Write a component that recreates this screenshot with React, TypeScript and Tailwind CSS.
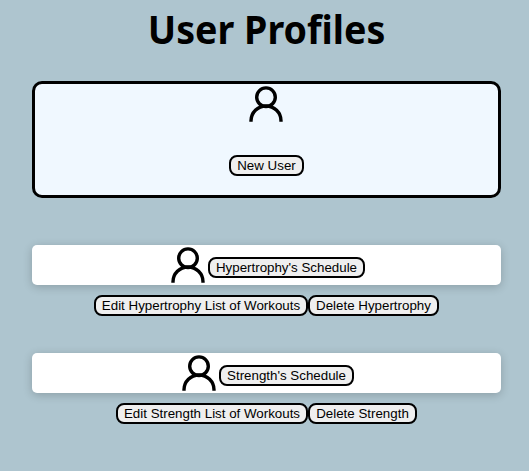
import React from "react";

function UserIcon() {
  return (
    <svg viewBox="0 0 40 40" className="block size-10 shrink-0" fill="none" stroke="#000" strokeWidth="3.4">
      <circle cx="20" cy="13.2" r="9.3" />
      <path d="M5 37.7v-.9a15 14.8 0 0 1 30 0v.9" />
    </svg>
  );
}

function Button({ width, children }: { width: string; children: React.ReactNode }) {
  return (
    <button
      className={`h-[21px] shrink-0 whitespace-nowrap rounded-lg border-2 border-black bg-[#efefef] text-center text-[13.333px] leading-[17px] text-black ${width}`}
    >
      {children}
    </button>
  );
}

type ProfileProps = { name: string; schedule: string; edit: string; remove: string };

function Profile({ name, schedule, edit, remove }: ProfileProps) {
  return (
    <section>
      <div className="flex h-10 justify-center rounded-[5px] bg-white shadow-[0_2px_10px_0_rgba(0,0,0,0.2)]">
        <UserIcon />
        <div className="flex pt-3">
          <Button width={schedule}>{name}'s Schedule</Button>
        </div>
      </div>
      <div className="mt-2.5 flex justify-center">
        <Button width={edit}>Edit {name} List of Workouts</Button>
        <Button width={remove}>Delete {name}</Button>
      </div>
    </section>
  );
}

export default function App() {
  return (
    <main className="flex h-[471px] w-[529px] flex-col overflow-hidden bg-[#aec5cf] pr-7 pl-8 font-['Liberation_Sans',Arial,sans-serif]">
      <h1 className="h-[81px] scale-x-[0.94] pt-0.5 text-center font-['Noto_Sans',sans-serif] text-[40px] leading-[54px] font-bold whitespace-nowrap text-black">
        User Profiles
      </h1>
      <section className="flex h-[117px] flex-col items-center rounded-[10px] border-3 border-black bg-[#f0f8ff]">
        <div className="pr-px">
          <UserIcon />
        </div>
        <div className="mt-[31px] flex">
          <Button width="w-[75px]">New User</Button>
        </div>
      </section>
      <div className="mt-[47px] flex flex-col gap-[37px]">
        <Profile name="Hypertrophy" schedule="w-[157px]" edit="w-[214px]" remove="w-[131px]" />
        <Profile name="Strength" schedule="w-[135px]" edit="w-[192px]" remove="w-[109px]" />
      </div>
    </main>
  );
}
